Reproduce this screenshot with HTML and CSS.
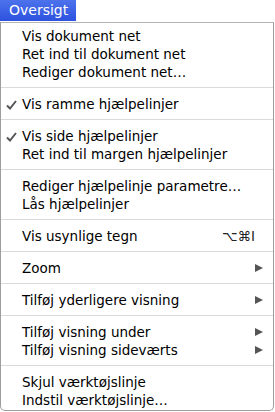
FILE: index.html
```html
<!DOCTYPE html>
<html lang="da">
<head>
  <meta charset="UTF-8" />
  <meta name="viewport" content="width=device-width, initial-scale=1.0"/>
  <title>Oversigt</title>
  <link rel="stylesheet" href="styles.css">
</head>
<body>
  <div class="menu-title">Oversigt</div>

  <div class="menu">
    <div class="group">
      <div class="item"><span class="mark"></span><span class="label">Vis dokument net</span></div>
      <div class="item"><span class="mark"></span><span class="label">Ret ind til dokument net</span></div>
      <div class="item"><span class="mark"></span><span class="label">Rediger dokument net…</span></div>
    </div>
    <div class="sep"></div>
    <div class="group">
      <div class="item">
        <span class="mark"><svg width="11" height="10" viewBox="0 0 11 10"><path d="M1 5.5 L4 8.5 L10 1" fill="none" stroke="#555" stroke-width="2"/></svg></span>
        <span class="label">Vis ramme hjælpelinjer</span>
      </div>
    </div>
    <div class="sep"></div>
    <div class="group">
      <div class="item">
        <span class="mark"><svg width="11" height="10" viewBox="0 0 11 10"><path d="M1 5.5 L4 8.5 L10 1" fill="none" stroke="#555" stroke-width="2"/></svg></span>
        <span class="label">Vis side hjælpelinjer</span>
      </div>
      <div class="item"><span class="mark"></span><span class="label">Ret ind til margen hjælpelinjer</span></div>
    </div>
    <div class="sep"></div>
    <div class="group">
      <div class="item"><span class="mark"></span><span class="label">Rediger hjælpelinje parametre…</span></div>
      <div class="item"><span class="mark"></span><span class="label">Lås hjælpelinjer</span></div>
    </div>
    <div class="sep"></div>
    <div class="group">
      <div class="item"><span class="mark"></span><span class="label">Vis usynlige tegn</span><span class="shortcut">⌥⌘I</span></div>
    </div>
    <div class="sep"></div>
    <div class="group">
      <div class="item"><span class="mark"></span><span class="label">Zoom</span><span class="arrow"></span></div>
    </div>
    <div class="sep"></div>
    <div class="group">
      <div class="item"><span class="mark"></span><span class="label">Tilføj yderligere visning</span><span class="arrow"></span></div>
    </div>
    <div class="sep"></div>
    <div class="group">
      <div class="item"><span class="mark"></span><span class="label">Tilføj visning under</span><span class="arrow"></span></div>
      <div class="item"><span class="mark"></span><span class="label">Tilføj visning sideværts</span><span class="arrow"></span></div>
    </div>
    <div class="sep"></div>
    <div class="group">
      <div class="item"><span class="mark"></span><span class="label">Skjul værktøjslinje</span></div>
      <div class="item"><span class="mark"></span><span class="label">Indstil værktøjslinje…</span></div>
    </div>
  </div>
</body>
</html>
```

FILE: styles.css
```css
* {
  margin: 0;
  padding: 0;
  box-sizing: border-box;
}

body {
  font-family: 'DejaVu Sans', sans-serif;
  background: #ffffff;
  color: #000000;
  width: 275px;
  height: 412px;
  overflow: hidden;
}

.menu-title {
  width: 76px;
  height: 21px;
  background: linear-gradient(#4d72ec, #2c52df);
  color: #ffffff;
  font-size: 14px;
  line-height: 21px;
  padding-left: 9px;
  margin-bottom: 1px;
}

.menu {
  width: 274px;
  height: 389px;
  border: 1px solid #9d9d9d;
  border-top-color: #b4b4b4;
  border-radius: 0 0 5px 5px;
  padding-top: 4px;
  background: #ffffff;
}

.item {
  display: flex;
  align-items: center;
  height: 18px;
  padding: 0 10px 0 5px;
  font-size: 13.5px;
  white-space: nowrap;
}

.mark {
  width: 16px;
  display: flex;
  align-items: center;
  padding-top: 2px;
}

.label {
  flex: 1;
}

.shortcut {
  font-size: 13.5px;
  padding-right: 8px;
  color: #222;
}

.arrow {
  width: 0;
  height: 0;
  border-top: 4.5px solid transparent;
  border-bottom: 4.5px solid transparent;
  border-left: 8px solid #555;
}

.sep {
  height: 1px;
  background: #dadada;
  margin: 6px 0 7px;
}
```
